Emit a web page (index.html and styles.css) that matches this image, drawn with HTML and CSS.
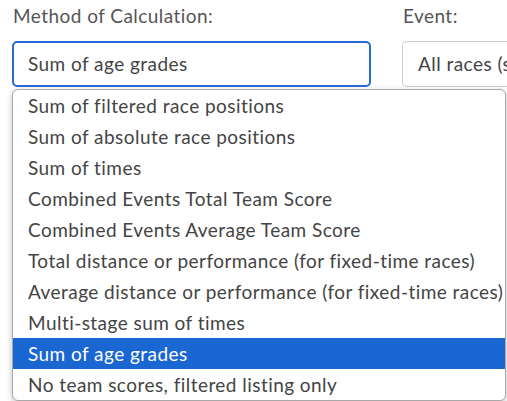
FILE: index.html
```html
<!DOCTYPE html>
<html>
<head>
<meta charset="utf-8">
<link rel="stylesheet" href="styles.css">
</head>
<body>
<div class="form-row">
  <div class="field field-method">
    <div class="label">Method of Calculation:</div>
    <div class="select select-focus">Sum of age grades</div>
  </div>
  <div class="field field-event">
    <div class="label">Event:</div>
    <div class="select">All races (s</div>
  </div>
</div>
<ul class="listbox">
  <li>Sum of filtered race positions</li>
  <li>Sum of absolute race positions</li>
  <li>Sum of times</li>
  <li>Combined Events Total Team Score</li>
  <li>Combined Events Average Team Score</li>
  <li>Total distance or performance (for fixed-time races)</li>
  <li>Average distance or performance (for fixed-time races)</li>
  <li>Multi-stage sum of times</li>
  <li class="selected">Sum of age grades</li>
  <li>No team scores, filtered listing only</li>
</ul>
</body>
</html>
```
FILE: styles.css
```css
html, body {
  margin: 0;
  padding: 0;
  background: #ffffff;
  overflow: hidden;
}
body {
  width: 507px;
  height: 401px;
  position: relative;
  font-family: Lato, "Open Sans", sans-serif;
  font-size: 19px;
  letter-spacing: 0.45px;
  color: #444444;
}
.form-row {
  display: flex;
  gap: 31px;
  padding: 3px 0 0 12px;
  overflow: hidden;
}
.field-method {
  width: 359px;
  flex: none;
}
.field-event {
  width: 105px;
  flex: none;
  overflow: hidden;
}
.label {
  color: #555555;
  height: 38px;
  line-height: 26px;
  padding-left: 1px;
  white-space: nowrap;
}
.select {
  box-sizing: border-box;
  height: 46px;
  line-height: 44px;
  border: 1px solid #cccccc;
  border-right: none;
  border-radius: 5px 0 0 5px;
  padding-left: 15px;
  color: #444444;
  white-space: nowrap;
  overflow: hidden;
}
.select-focus {
  border: 2px solid #2a6ad7;
  border-radius: 5px;
  padding-left: 14px;
  line-height: 42px;
}
.listbox {
  position: absolute;
  left: 12px;
  top: 89px;
  width: 494px;
  box-sizing: border-box;
  margin: 0;
  padding: 0;
  list-style: none;
  background: #ffffff;
  border: 1px solid #a9a9a9;
  border-radius: 6px;
  box-shadow: 0 2px 6px rgba(0, 0, 0, 0.25);
  overflow: hidden;
}
.listbox li {
  height: 31px;
  line-height: 31px;
  padding-left: 15px;
  white-space: nowrap;
  color: #444444;
}
.listbox li.selected {
  background: #1a66d2;
  color: #ffffff;
}
```
